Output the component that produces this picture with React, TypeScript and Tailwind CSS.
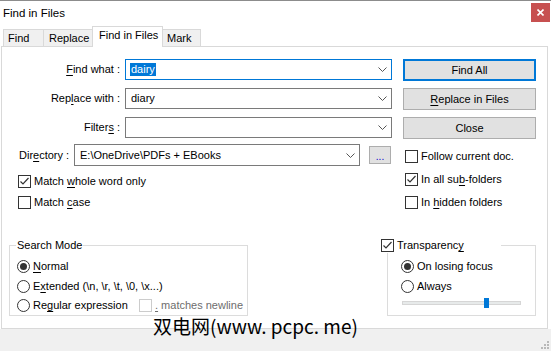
import React from "react";

const U = ({ children }: { children: React.ReactNode }) => (
  <span className="underline underline-offset-[2px] decoration-[1px]">{children}</span>
);

function Check({ on, disabled }: { on?: boolean; disabled?: boolean }) {
  return (
    <span
      className={`w-[13px] h-[13px] shrink-0 border bg-white flex items-center justify-center ${
        disabled ? "border-[#cccccc]" : "border-[#333333]"
      }`}
    >
      {on && (
        <svg width="11" height="11" viewBox="0 0 11 11">
          <polyline points="1.5,5.5 4,8 9.5,2" fill="none" stroke="#333" strokeWidth="1.2" />
        </svg>
      )}
    </span>
  );
}

function Radio({ on }: { on?: boolean }) {
  return (
    <span className="w-[13px] h-[13px] shrink-0 rounded-full border border-[#333333] bg-white flex items-center justify-center">
      {on && <span className="w-[7px] h-[7px] rounded-full bg-[#333333]" />}
    </span>
  );
}

function Chevron() {
  return (
    <svg width="9" height="5" viewBox="0 0 9 5" className="shrink-0">
      <polyline points="0.5,0.5 4.5,4.5 8.5,0.5" fill="none" stroke="#555" strokeWidth="1" />
    </svg>
  );
}

function Combo({ width, focused, children }: { width: string; focused?: boolean; children?: React.ReactNode }) {
  return (
    <div
      className={`${width} h-full flex items-center justify-between border bg-white pl-[4px] pr-[4px] ${
        focused ? "border-[#0078d7]" : "border-[#7a7a7a]"
      }`}
    >
      <div className="flex items-center">{children}</div>
      <Chevron />
    </div>
  );
}

function Btn({ children, primary }: { children: React.ReactNode; primary?: boolean }) {
  return (
    <div
      className={`w-[133px] h-[22px] flex items-center justify-center bg-[#e1e1e1] ${
        primary ? "border-2 border-[#0078d7]" : "border border-[#adadad]"
      }`}
    >
      {children}
    </div>
  );
}

export default function App() {
  return (
    <div className="w-[551px] h-[351px] bg-white relative overflow-hidden text-[11px] leading-[15px] text-black font-['Liberation_Sans',Arial,sans-serif] whitespace-nowrap flex flex-col">
      {/* title bar */}
      <div className="h-[26px] shrink-0 border-t border-[#8c8c8c] flex items-start justify-between">
        <span className="ml-[3px] mt-[5px] text-[11.5px]">Find in Files</span>
        <div className="mt-[2px] mr-[1px] w-[19px] h-[19px] bg-[#c75050] flex items-center justify-center">
          <svg width="7" height="7" viewBox="0 0 7 7">
            <path d="M0.5 0.5L6.5 6.5M6.5 0.5L0.5 6.5" stroke="#fff" strokeWidth="1.6" />
          </svg>
        </div>
      </div>

      {/* tabs */}
      <div className="h-[20px] shrink-0 flex items-end pl-[3px] relative z-10">
        <div className="w-[41px] h-[17px] border border-b-0 border-[#d9d9d9] bg-[#f0f0f0] pl-[4px] flex items-center">Find</div>
        <div className="-ml-px w-[50px] h-[17px] border border-b-0 border-[#d9d9d9] bg-[#f0f0f0] pl-[5px] flex items-center">Replace</div>
        <div className="-ml-px -mb-px relative z-10 w-[71px] h-[21px] border border-b-0 border-[#d9d9d9] bg-white pl-[6px] pb-[3px] flex items-center">
          Find in Files
        </div>
        <div className="-ml-px w-[39px] h-[17px] border border-b-0 border-[#d9d9d9] bg-[#f0f0f0] pl-[4px] flex items-center">Mark</div>
      </div>

      {/* panel */}
      <div className="ml-[1px] w-[547px] h-[283px] shrink-0 border border-[#d9d9d9] bg-white flex flex-col">
        <div className="h-[198px] shrink-0 flex pt-[12px]">
          {/* left column */}
          <div className="w-[390px] flex flex-col">
            <div className="h-[21px] flex items-center">
              <span className="w-[119px] text-right pr-[1px]">
                <U>F</U>ind what :
              </span>
              <div className="ml-[4px] h-full">
                <Combo width="w-[267px]" focused>
                  <span className="bg-[#0078d7] text-white leading-[13px] px-[1px]">dairy</span>
                </Combo>
              </div>
            </div>
            <div className="mt-[8px] h-[21px] flex items-center">
              <span className="w-[119px] text-right pr-[1px]">
                Rep<U>l</U>ace with :
              </span>
              <div className="ml-[4px] h-full">
                <Combo width="w-[267px]">
                  <span className="pl-[1px]">diary</span>
                </Combo>
              </div>
            </div>
            <div className="mt-[8px] h-[21px] flex items-center">
              <span className="w-[119px] text-right pr-[1px]">
                Filter<U>s</U> :
              </span>
              <div className="ml-[4px] h-full">
                <Combo width="w-[267px]" />
              </div>
            </div>
            <div className="mt-[6px] h-[22px] flex items-center pl-[17px]">
              <span className="w-[55px]">
                Dir<U>e</U>ctory :
              </span>
              <div className="h-full">
                <Combo width="w-[286px]">
                  <span className="pl-[1px]">E:\OneDrive\PDFs + EBooks</span>
                </Combo>
              </div>
              <div className="ml-[9px] w-[22px] h-[18px] bg-[#e1e1e1] border border-[#adadad] flex items-center justify-center text-[#0000cc] text-[10px] leading-[10px] pt-[3px]">
                ...
              </div>
            </div>
            <div className="mt-[9px] pl-[16px] h-[13px] flex items-center gap-[3px]">
              <Check on />
              <span>
                Match <U>w</U>hole word only
              </span>
            </div>
            <div className="mt-[8px] pl-[16px] h-[13px] flex items-center gap-[3px]">
              <Check />
              <span>
                Match <U>c</U>ase
              </span>
            </div>
          </div>

          {/* right column */}
          <div className="ml-[11px] flex flex-col">
            <Btn primary>Find All</Btn>
            <div className="mt-[7px]">
              <Btn>
                <span>
                  <U>R</U>eplace in Files
                </span>
              </Btn>
            </div>
            <div className="mt-[7px]">
              <Btn>Close</Btn>
            </div>
            <div className="mt-[11px] pl-[2px] h-[13px] flex items-center gap-[3px]">
              <Check />
              <span>Follow current doc.</span>
            </div>
            <div className="mt-[10px] pl-[2px] h-[13px] flex items-center gap-[3px]">
              <Check on />
              <span>
                In all su<U>b</U>-folders
              </span>
            </div>
            <div className="mt-[10px] pl-[2px] h-[13px] flex items-center gap-[3px]">
              <Check />
              <span>
                In <U>h</U>idden folders
              </span>
            </div>
          </div>
        </div>

        {/* group boxes */}
        <div className="flex">
          <div className="ml-[7px] w-[239px] h-[71px] border border-[#dcdcdc] flex flex-col">
            <span className="-mt-[8px] ml-[6px] px-[1px] h-[15px] self-start bg-white">Search Mode</span>
            <div className="mt-[3px] pl-[7px] h-[20px] flex items-center gap-[3px]">
              <Radio on />
              <span>
                <U>N</U>ormal
              </span>
            </div>
            <div className="pl-[7px] h-[20px] flex items-center gap-[3px]">
              <Radio />
              <span>
                E<U>x</U>tended (\n, \r, \t, \0, \x...)
              </span>
            </div>
            <div className="pl-[7px] h-[19px] flex items-center">
              <div className="w-[122px] flex items-center gap-[3px]">
                <Radio />
                <span>
                  Re<U>g</U>ular expression
                </span>
              </div>
              <div className="flex items-center gap-[3px] text-[#6d6d6d]">
                <Check disabled />
                <span>
                  <U>.</U> matches newline
                </span>
              </div>
            </div>
          </div>

          <div className="ml-[139px] w-[149px] h-[71px] border border-[#dcdcdc] flex flex-col">
            <div className="-mt-[8px] -ml-[7px] w-[120px] h-[15px] bg-white flex items-center gap-[3px]">
              <Check on />
              <span>
                Transparenc<U>y</U>
              </span>
            </div>
            <div className="mt-[3px] pl-[13px] h-[20px] flex items-center gap-[3px]">
              <Radio on />
              <span>On losing focus</span>
            </div>
            <div className="pl-[13px] h-[20px] flex items-center gap-[3px]">
              <Radio />
              <span>Always</span>
            </div>
            <div className="pl-[14px] h-[14px] flex items-center">
              <div className="relative w-[119px] h-[4px] bg-[#e7eaea] border border-[#d6d6d6]">
                <div className="absolute left-[81px] -top-[4px] w-[5px] h-[10px] bg-[#0078d7]" />
              </div>
            </div>
          </div>
        </div>
      </div>

      {/* status area */}
      <div className="flex-1 bg-[#f0f0f0] flex justify-end items-end pr-[2px] pb-[2px]">
        <svg width="9" height="9" viewBox="0 0 9 9">
          <g fill="#b8b8b8">
            <rect x="7" y="1" width="2" height="2" />
            <rect x="4" y="4" width="2" height="2" />
            <rect x="7" y="4" width="2" height="2" />
            <rect x="1" y="7" width="2" height="2" />
            <rect x="4" y="7" width="2" height="2" />
            <rect x="7" y="7" width="2" height="2" />
          </g>
        </svg>
      </div>

      {/* watermark */}
      <div className="absolute left-[153px] top-[313px] text-[19px] leading-[26px] text-black font-['Noto_Sans_CJK_SC',sans-serif] whitespace-nowrap">
        双电网(www. pcpc. me)
      </div>
    </div>
  );
}
